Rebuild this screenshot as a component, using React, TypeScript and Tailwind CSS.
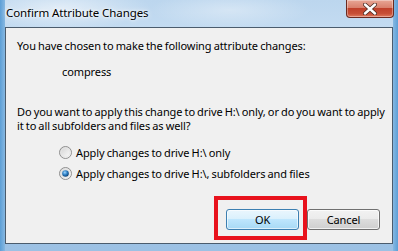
import React from "react";

function Radio({ checked }: { checked: boolean }) {
  return (
    <svg width="13" height="13" viewBox="0 0 13 13" className="shrink-0">
      <defs>
        <linearGradient id={checked ? "rgc" : "rgu"} x1="0" y1="0" x2="1" y2="1">
          <stop offset="0" stopColor="#d0d0d0" />
          <stop offset="1" stopColor="#ffffff" />
        </linearGradient>
        <radialGradient id="dot" cx="0.4" cy="0.35" r="0.7">
          <stop offset="0" stopColor="#9fd6ff" />
          <stop offset="0.5" stopColor="#2d7fc4" />
          <stop offset="1" stopColor="#0c3a6a" />
        </radialGradient>
      </defs>
      <circle cx="6.5" cy="6.5" r="6" fill={`url(#${checked ? "rgc" : "rgu"})`} stroke="#8f8f8f" strokeWidth="1" />
      <circle cx="6.5" cy="6.5" r="4.6" fill="none" stroke="#e6e6e6" strokeWidth="1" />
      {checked && <circle cx="6.5" cy="6.5" r="3.3" fill="url(#dot)" />}
    </svg>
  );
}

export default function App() {
  return (
    <div
      className="relative w-[398px] h-[251px] overflow-hidden tracking-[-0.1px] [word-spacing:-0.6px]"
      style={{ fontFamily: '"Segoe UI", "Noto Sans", "Open Sans", sans-serif' }}
    >
      <div className="absolute inset-0 bg-[linear-gradient(180deg,#bcd6ee_0%,#c6ddf2_15%,#a9c9e6_60%,#9cc1e4_100%)]" />
      <div className="absolute inset-0 bg-[radial-gradient(ellipse_90px_22px_at_60px_8px,rgba(255,255,255,0.55),rgba(255,255,255,0)),radial-gradient(ellipse_80px_18px_at_230px_10px,rgba(255,255,255,0.35),rgba(255,255,255,0))]" />
      <div className="absolute left-0 top-0 bottom-0 w-[5px] bg-[linear-gradient(90deg,#5d9fd6,#86b8e2)]" />
      <div className="absolute right-0 top-0 bottom-0 w-[5px] bg-[linear-gradient(270deg,#5d9fd6,#86b8e2)]" />

      <div className="relative flex flex-col h-full">
        <div className="flex h-[27px] items-start">
          <div className="pl-[6px] pt-[5px] text-[11.5px] leading-[15px] tracking-[-0.1px] [word-spacing:0px] text-black whitespace-nowrap [text-shadow:0_0_6px_#ffffff,0_0_3px_#ffffff]">
            Confirm Attribute Changes
          </div>
          <div className="ml-auto mr-[4px] w-[48px] h-[18px] rounded-b-[4px] border border-t-0 border-[#6b2a20] bg-[linear-gradient(180deg,#e8a695_0%,#d9806c_45%,#c0402a_50%,#c74f36_80%,#e07a5e_100%)] flex items-center justify-center shadow-[inset_0_0_0_1px_rgba(255,255,255,0.35)]">
            <svg width="14" height="12" viewBox="0 0 14 12">
              <path d="M2 1.5 L12 10.5 M12 1.5 L2 10.5" stroke="#4a2a22" strokeWidth="4" strokeLinecap="round" />
              <path d="M2 1.5 L12 10.5 M12 1.5 L2 10.5" stroke="#ffffff" strokeWidth="2.4" strokeLinecap="round" />
            </svg>
          </div>
        </div>

        <div className="mx-[5px] h-[217px] border border-[#4b5c6d] bg-[#f0f0f0] flex flex-col text-[11px] leading-[15px] text-black relative whitespace-nowrap">
          <div className="pl-[11px] pt-[10px]">You have chosen to make the following attribute changes:</div>
          <div className="pl-[56px] pt-[11px]">compress</div>
          <div className="pl-[11px] pt-[26px] leading-[14px]">
            <div>Do you want to apply this change to drive H:\ only, or do you want to apply</div>
            <div>it to all subfolders and files as well?</div>
          </div>
          <div className="pl-[53px] pt-[12px] flex flex-col gap-[6px]">
            <label className="flex items-center gap-[4px] h-[15px]">
              <Radio checked={false} />
              <span>Apply changes to drive H:\ only</span>
            </label>
            <label className="flex items-center gap-[4px] h-[15px]">
              <Radio checked={true} />
              <span>Apply changes to drive H:\, subfolders and files</span>
            </label>
          </div>
          <div className="mt-auto mb-[13px] flex justify-end gap-[8px] pr-[12px]">
            <button className="relative w-[73px] h-[21px] rounded-[3px] border border-[#3c7fb1] bg-[linear-gradient(180deg,#eaf6fd_0%,#d9f0fc_50%,#bee6fd_50%,#a7d9f5_100%)] shadow-[inset_0_0_0_1px_rgba(255,255,255,0.6)] text-[11px] leading-[15px] text-black">
              OK
              <span className="absolute left-[-13px] top-[-14px] w-[93px] h-[44px] border-4 border-[#e8121c]" />
            </button>
            <button className="w-[73px] h-[21px] rounded-[3px] border border-[#707070] bg-[linear-gradient(180deg,#f2f2f2_0%,#ebebeb_50%,#dddddd_50%,#cfcfcf_100%)] shadow-[inset_0_0_0_1px_rgba(255,255,255,0.7)] text-[11px] leading-[15px] text-black">
              Cancel
            </button>
          </div>
        </div>
      </div>
    </div>
  );
}
